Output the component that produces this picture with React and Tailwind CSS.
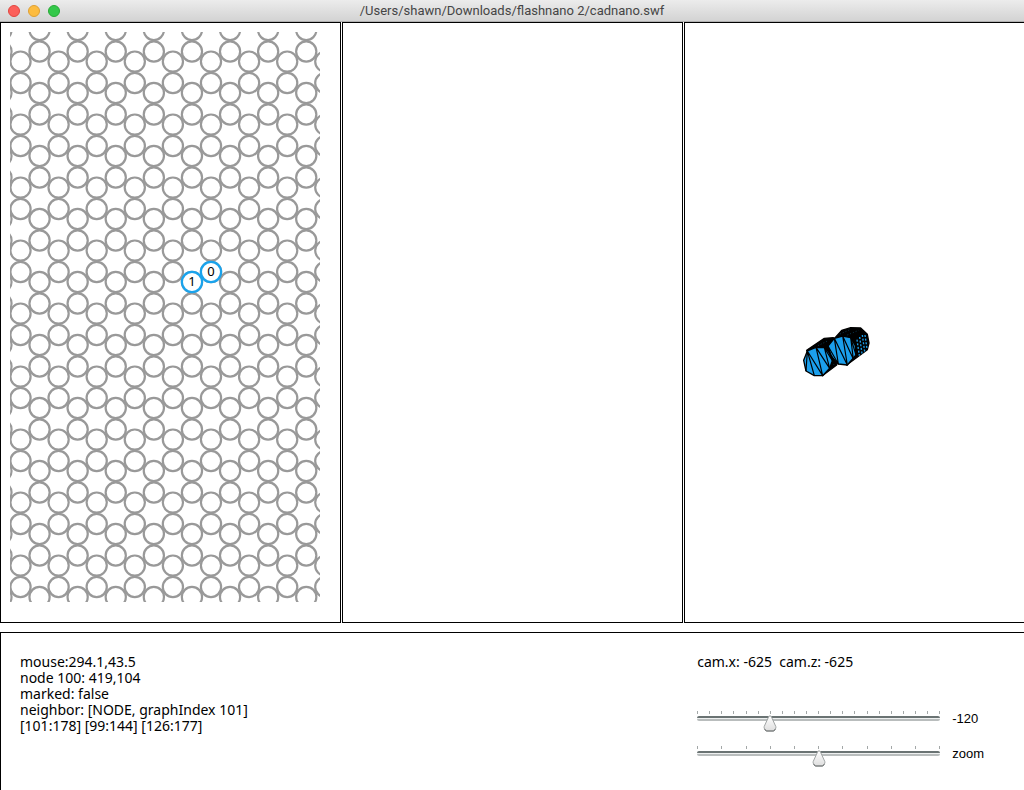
import { useState } from "react";

const PITCH_X = 19.05;
const PERIOD_Y = 63;
const RADIUS = 10.1;

const nodes = [];
for (let col = -1; col <= 16; col++) {
  const x = 10.5 + col * PITCH_X;
  const starts = col % 2 === 0 ? [-33.4, -12] : [-2, 19.5];
  for (const start of starts) {
    for (let row = 0; row <= 10; row++) {
      nodes.push({ x, y: start + row * PERIOD_Y });
    }
  }
}

const marked = [
  { id: 1, x: 182, y: 250 },
  { id: 0, x: 201, y: 240 },
];

function Lattice() {
  return (
    <svg width="310" height="570" viewBox="0 0 310 570" className="block" role="img" aria-label="Honeycomb lattice">
      <g fill="none" stroke="#999999" strokeWidth="2.2">
        {nodes.map((n) => (
          <circle key={`${n.x}-${n.y}`} cx={n.x} cy={n.y} r={RADIUS} />
        ))}
      </g>
      {marked.map((n) => (
        <g key={n.id}>
          <circle cx={n.x} cy={n.y} r={RADIUS} fill="#fff" stroke="#1aa3ec" strokeWidth="2.2" />
          <text x={n.x} y={n.y + 4} textAnchor="middle" className="fill-black font-['Noto_Sans',sans-serif] text-[13px]">
            {n.id}
          </text>
        </g>
      ))}
    </svg>
  );
}

function Helices() {
  return (
    <svg width="90" height="75" viewBox="0 0 270 225" className="block" role="img" aria-label="Helix model">
      <g stroke="#000" strokeWidth="4" strokeLinejoin="round">
        <path fill="#000" d="M50 106 L103 70 L130 68 L150 90 L140 150 L97 182 Z" />
        <path fill="#000" d="M114 92 L155 46 L182 38 L212 39 L232 58 L237 84 L232 104 L170 150 Z" />
        <path fill="#1b9fec" d="M52 108 L78 97 L103 98 L121 115 L127 137 L119 160 L98 182 L73 182 L48 168 L41 136 Z" />
        <path fill="#1b9fec" d="M114 93 L133 70 L158 63 L182 68 L196 92 L198 120 L172 150 L145 147 L122 122 Z" />
      </g>
      <g stroke="#000" strokeWidth="3.5" fill="none" strokeLinejoin="round">
        <path d="M48 168 L52 108 L73 182 M52 108 L98 182 L78 97 L119 160 L103 98 L127 137" />
        <path d="M122 122 L114 93 L145 147 L133 70 L172 150 L158 63 L190 132 L182 68 L198 120" />
        <path d="M112 100 L128 132" strokeWidth="6" />
      </g>
      <g stroke="#1b9fec" strokeWidth="4" fill="none" strokeDasharray="6 5">
        <path d="M201 74 L208 122" />
        <path d="M209 66 L216 116" />
        <path d="M217 60 L224 110" />
        <path d="M225 60 L231 102" />
      </g>
      <g stroke="#176f9f" strokeWidth="1.5" fill="none" strokeDasharray="3 6">
        <path d="M150 57 L180 44 M172 60 L206 46 M84 92 L116 76 M130 150 L136 144" />
      </g>
    </svg>
  );
}

function TickSlider({ id, name, label, min, max, step, initial, ticks }) {
  const [value, setValue] = useState(initial);
  const percent = ((value - min) / (max - min)) * 100;
  return (
    <div className="flex items-start gap-3">
      <div className="relative h-5 w-[243px]">
        <div className="flex justify-between">
          {Array.from({ length: ticks }, (_, i) => (
            <span key={i} className="h-[3px] w-px bg-[#a3a8a8]" />
          ))}
        </div>
        <div className="mt-[2px] h-[5px] rounded-[2px] border-t-2 border-b-2 border-t-[#6a7373] border-b-[#b9bdbd] bg-[#eef0f0]" />
        <svg
          width="14"
          height="17"
          viewBox="0 0 14 17"
          className="absolute top-1 -translate-x-1/2"
          style={{ left: `${percent}%` }}
          aria-hidden="true"
        >
          <defs>
            <linearGradient id={`${id}-fill`} x1="0" y1="0" x2="0" y2="1">
              <stop offset="0" stopColor="#ffffff" />
              <stop offset="1" stopColor="#dedede" />
            </linearGradient>
          </defs>
          <path d="M6 1 H8 L12.8 11.5 Q13.2 13 12.4 14 L10.8 16 H3.2 L1.6 14 Q0.8 13 1.2 11.5 Z" fill={`url(#${id}-fill)`} stroke="#a0a4a4" />
          <path d="M1.6 14 L3.2 16 H10.8 L12.4 14" fill="none" stroke="#6c7070" />
        </svg>
        <input
          id={id}
          type="range"
          min={min}
          max={max}
          step={step}
          value={value}
          aria-label={name}
          onChange={(e) => setValue(Number(e.target.value))}
          className="absolute inset-0 m-0 h-full w-full cursor-pointer opacity-0"
        />
      </div>
      <label htmlFor={id} className="font-['Liberation_Sans',Arial,sans-serif] text-[13px] leading-4">
        {label ?? value}
      </label>
    </div>
  );
}

export default function App() {
  return (
    <div className="flex min-h-screen flex-col overflow-hidden bg-white font-['Noto_Sans',sans-serif] text-black">
      <header className="relative flex h-[22px] items-center justify-center border-b border-[#b1b1b1] bg-linear-to-b from-[#ececec] to-[#d3d3d3]">
        <div className="absolute left-2 flex gap-2">
          <button type="button" aria-label="Close" className="size-3 rounded-full border border-[#e2463f] bg-[#fc605b]" />
          <button type="button" aria-label="Minimize" className="size-3 rounded-full border border-[#dfa033] bg-[#fdbc40]" />
          <button type="button" aria-label="Zoom" className="size-3 rounded-full border border-[#27aa35] bg-[#34c84a]" />
        </div>
        <h1 className="font-[family-name:Roboto,sans-serif] text-[13px] leading-5 text-[#454545]">
          /Users/shawn/Downloads/flashnano 2/cadnano.swf
        </h1>
      </header>

      <main className="-mr-px grid flex-1 grid-cols-3 gap-px">
        <section aria-label="Slice view" className="border border-black px-[9px] pt-[9px] pb-5">
          <Lattice />
        </section>
        <section aria-label="Path view" className="border border-black" />
        <section aria-label="Model view" className="flex items-center justify-center border border-black pt-[60px] pr-10">
          <Helices />
        </section>
      </main>

      <footer className="mt-[9px] flex justify-between border-t border-l border-black pt-[21px] pr-10 pb-6 pl-[19px]">
        <div className="text-[14px] leading-4">
          <p>mouse:294.1,43.5</p>
          <p>node 100: 419,104</p>
          <p>marked: false</p>
          <p>neighbor: [NODE, graphIndex 101]</p>
          <p>[101:178] [99:144] [126:177]</p>
        </div>
        <div>
          <p className="text-[14px] leading-4 whitespace-pre">cam.x: -625  cam.z: -625</p>
          <div className="mt-[41px] flex flex-col gap-[15px]">
            <TickSlider id="rotation" name="Rotation" min={-300} max={300} step={30} initial={-120} ticks={21} />
            <TickSlider id="zoom" name="Zoom" label="zoom" min={0} max={100} step={10} initial={50} ticks={11} />
          </div>
        </div>
      </footer>
    </div>
  );
}
